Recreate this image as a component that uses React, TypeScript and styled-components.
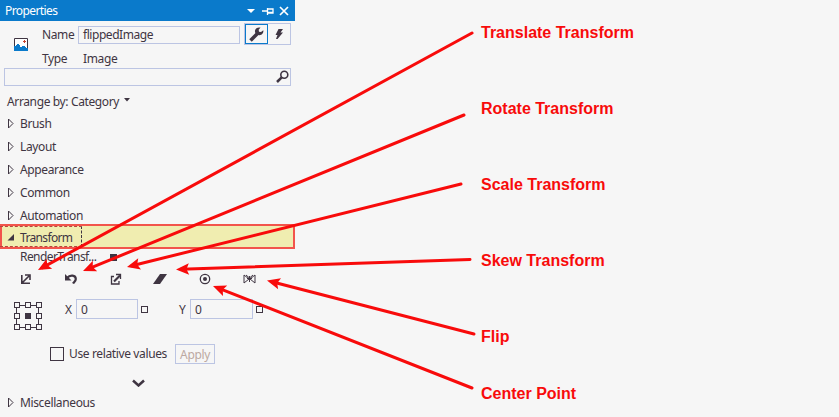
import React from "react";
import styled, { createGlobalStyle } from "styled-components";

const ink = "#3f3542";
const line = "#bcc5e3";

const Global = createGlobalStyle`
  *{box-sizing:border-box}
  body{margin:0;background:#f6f6f6;overflow:hidden}
`;
const Page = styled.main`
  position:relative;display:flex;width:839px;height:417px;background:#f6f6f6;
  font:12px/16px "Noto Sans","Open Sans",sans-serif;color:${ink};
`;
const Panel = styled.section`width:295px;height:417px;display:flex;flex-direction:column;flex:none;`;
const Text = styled.span<{ $track?: number }>`
  white-space:nowrap;letter-spacing:${p => p.$track ?? -0.37}px;
`;
const TitleBar = styled.header`
  height:21px;flex:none;background:#0a7acb;color:#fff;display:flex;justify-content:space-between;align-items:center;padding:0 5px 0 5px;
`;
const Identity = styled.div`
  height:47px;flex:none;display:grid;grid-template-columns:42px 36px 162px 51px;
  grid-template-rows:24px 23px;padding-top:2px;
`;
const Picture = styled.div`grid-row:1 / 3;padding:15px 0 0 14px;svg{display:block}`;
const Cell = styled.div<{ $inset?: number }>`display:flex;align-items:center;padding-left:${p => p.$inset ?? 0}px;`;
const Field = styled.div<{ $w: number; $h: number }>`
  width:${p => p.$w}px;height:${p => p.$h}px;border:1px solid ${line};display:flex;align-items:center;padding-left:4px;flex:none;
`;
const Switcher = styled.div`margin-left:4px;width:47px;height:22px;border:1px solid ${line};display:flex;`;
const Mode = styled.div<{ $active?: boolean }>`
  width:${p => (p.$active ? 23 : 22)}px;height:20px;flex:none;display:flex;align-items:center;justify-content:center;
  border:1px solid ${p => (p.$active ? "#0a7acb" : "transparent")};
`;
const Search = styled.div`
  margin-left:4px;width:287px;height:18px;flex:none;border:1px solid ${line};display:flex;justify-content:flex-end;padding:1px 1px 0 0;
`;
const Arrange = styled.div`height:26px;flex:none;padding:8px 0 0 7px;display:flex;gap:5px;svg{margin-top:4px}`;
const Category = styled.div`
  height:23px;flex:none;display:flex;align-items:center;padding-left:7px;gap:6px;
  svg{margin-top:-1px}
`;
const Selected = styled.div`
  height:25px;margin-top:-3px;flex:none;border:2px solid #f2544b;background:#f0edb0;display:flex;
`;
const Focus = styled.div`
  width:82px;height:21px;margin-left:-2px;display:flex;align-items:center;padding:2px 0 0 7px;gap:6px;
  border:1px dashed ${ink};border-left:0;border-top-color:#b5443e;border-bottom-color:#b5443e;
`;
const Property = styled.div`height:16px;flex:none;display:flex;align-items:center;padding-left:20px;`;
const PropertyName = styled.span`width:90px;white-space:nowrap;letter-spacing:-.58px;`;
const Marker = styled.i<{ $filled?: boolean }>`
  width:7px;height:7px;flex:none;border:1px solid ${ink};background:${p => (p.$filled ? ink : "transparent")};
`;
const Tools = styled.div`
  height:28px;flex:none;display:grid;grid-template-columns:repeat(6,44.7px);padding-left:4px;align-items:center;justify-items:center;
`;
const Coordinates = styled.div`height:48px;flex:none;display:flex;padding:6px 0 0 14px;align-items:flex-start;`;
const Axis = styled.div<{ $left: number }>`
  display:flex;height:20px;align-items:center;margin-left:${p => p.$left}px;line-height:18px;
`;
const AxisName = styled.span`width:11px;padding-top:1px;`;
const Digit = styled.span`padding-top:1px;`;
const Options = styled.div`height:28px;flex:none;display:flex;align-items:center;padding-left:50px;margin-top:-1px;`;
const Check = styled.i`width:14px;height:14px;border:1px solid ${ink};margin-right:5px;flex:none;`;
const Apply = styled.button`
  margin:0 0 0 auto;width:40px;height:20px;padding:0;border:1px solid ${line};background:transparent;color:#bca9a2;font:inherit;
  line-height:20px;
`;
const OptionGroup = styled.div`display:flex;align-items:center;width:165px;`;
const More = styled.div`height:23px;flex:none;display:flex;justify-content:center;align-items:flex-end;padding:0 19px 4px 0;`;
const Notes = styled.aside`
  padding:23px 0 0 186px;display:flex;flex-direction:column;color:#f80b0b;font:bold 16px/20px "Liberation Sans",Arial,sans-serif;
`;
const Note = styled.div<{ $step?: number }>`height:${p => p.$step ?? 76}px;flex:none;white-space:nowrap;`;
const Overlay = styled.svg`position:absolute;inset:0;pointer-events:none;`;

const Closed = () => (
  <svg width="7" height="11" viewBox="0 0 7 11"><path d="M1.500 1v9L6 5.500z" fill="none" stroke={ink} /></svg>
);

const arrows = [
  [472, 33, 38, 270],
  [464, 115, 83, 271],
  [461, 184, 127, 267],
  [470, 259.5, 176, 269.5],
  [474, 334, 267, 280.5],
  [472, 388, 213, 286],
];
const Arrow = ({ at: [x1, y1, x2, y2] }: { at: number[] }) => {
  const angle = (Math.atan2(y2 - y1, x2 - x1) * 180) / Math.PI;
  const length = Math.hypot(x2 - x1, y2 - y1);
  return (
    <g transform={`translate(${x2} ${y2}) rotate(${angle})`}>
      <path d={`M${-length} 0H-5`} stroke="#f80b0b" strokeWidth="3" strokeLinecap="round" />
      <path d="M0 0L-13 -5.700L-10.500 0L-13 5.700Z" fill="#f80b0b" />
    </g>
  );
};

const categories = ["Brush", "Layout", "Appearance", "Common", "Automation"];

export default function App() {
  return (
    <Page>
      <Global />
      <Panel>
        <TitleBar>
          <Text $track={-0.6}>Properties</Text>
          <svg width="44" height="12" viewBox="0 0 44 12">
            <path d="M1 4h8L5 8z" fill="#fff" />
            <path d="M16 6h5M21.500 3v7M22 4h5v4h-5M22 7.500h5" fill="none" stroke="#fff" strokeWidth="1.300" />
            <path d="M34 2l8 8M42 2l-8 8" stroke="#fff" strokeWidth="1.700" />
          </svg>
        </TitleBar>
        <Identity>
          <Picture>
            <svg width="14" height="13" viewBox="0 0 14 13">
              <path d="M.5.5h13v12H.5z" fill="#fff" stroke={ink} />
              <path d="M0 8h2V7h1V6h2v1h1v2h2V8h3v1h1v1h2v3H0z" fill="#0a7acb" />
              <path d="M9 3.500h3M10.500 2v3" stroke="#c7432e" />
            </svg>
          </Picture>
          <Cell><Text>Name</Text></Cell>
          <Cell><Field $w={162} $h={18}><Text $track={-0.45}>flippedImage</Text></Field></Cell>
          <Switcher>
            <Mode $active>
              <svg width="15" height="15" viewBox="0 0 15 15">
                <path d="M1.500 13.500L9 6" stroke={ink} strokeWidth="3.600" />
                <path d="M11.500.6L9.700 2.800l.3 2 2 .3L14.300 3.300c.5 2.500-1.200 5-4 4.900C7.400 8 5.600 6 6 3.600 6.500 1 9 0 11.500.6z" fill={ink} />
              </svg>
            </Mode>
            <Mode>
              <svg width="9" height="12" viewBox="0 0 9 12"><path d="M3.500 1H8L5.500 4.500H8L2.500 11H1l1.500-4H.5z" fill={ink} /></svg>
            </Mode>
          </Switcher>
          <Cell><Text>Type</Text></Cell>
          <Cell $inset={5}><Text>Image</Text></Cell>
        </Identity>
        <Search>
          <svg width="13" height="13" viewBox="0 0 13 13">
            <circle cx="8.300" cy="4.700" r="3.500" fill="none" stroke={ink} strokeWidth="1.600" />
            <path d="M5.700 7.300L1 12" stroke={ink} strokeWidth="2.500" />
          </svg>
        </Search>
        <Arrange>
          <Text>Arrange by: Category</Text>
          <svg width="6" height="4" viewBox="0 0 6 4"><path d="M0 0h6L3 3.500z" fill={ink} /></svg>
        </Arrange>
        {categories.map(name => <Category key={name}><Closed /><Text>{name}</Text></Category>)}
        <Selected>
          <Focus>
            <svg width="7" height="7" viewBox="0 0 7 7"><path d="M7 0v6.500H.5z" fill={ink} /></svg>
            <Text $track={-0.65}>Transform</Text>
          </Focus>
        </Selected>
        <Property><PropertyName>RenderTransf...</PropertyName><Marker $filled /></Property>
        <Tools>
          <svg width="12" height="12" viewBox="0 0 12 12"><path d="M1.800 2v8.200H10M2.500 9.500L9 3M5 2h5v5" fill="none" stroke={ink} strokeWidth="1.600" /></svg>
          <svg width="14" height="12" viewBox="0 0 14 12"><path d="M3 5C6 1.500 11.800 2 11.800 6c0 2-1.800 3-2.800 4.500" fill="none" stroke={ink} strokeWidth="2.200" /><path d="M1 1v6.500h6.500z" fill={ink} /></svg>
          <svg width="12" height="12" viewBox="0 0 12 12"><path d="M4 3.500H1.500v7.500H9V8M6 1.500h4.500V6" fill="none" stroke={ink} strokeWidth="1.300" /><path d="M4 8.500L10 2.500" stroke={ink} strokeWidth="2.200" /></svg>
          <svg width="14" height="10" viewBox="0 0 14 10"><path d="M7 0h7L7 10H0z" fill={ink} /></svg>
          <svg width="12" height="12" viewBox="0 0 12 12"><circle cx="6" cy="6" r="4.700" fill="none" stroke={ink} strokeWidth="1.300" /><circle cx="6" cy="6" r="2" fill={ink} /></svg>
          <svg width="13" height="10" viewBox="0 0 13 10"><path d="M1 1v8l5-4zM12 1v8L7 5zM3 1l3.500 3L10 1M6.500 2v6M4 4.500h5" fill="none" stroke={ink} /></svg>
        </Tools>
        <Coordinates>
          <svg width="28" height="32" viewBox="0 0 28 32">
            <path d="M2.500 6.500h22v22h-22z" fill="none" stroke={ink} />
            {[3.5, 14.5, 25.5].map(y => [2.5, 13.5, 24.5].map(x => (
              <rect key={`${x}-${y}`} x={x - 2} y={y} width="5" height="5" fill={x === 13.5 && y === 14.5 ? ink : "#f6f6f6"} stroke={ink} />
            )))}
          </svg>
          <Axis $left={23}><AxisName>X</AxisName><Field $w={62} $h={20}><Digit>0</Digit></Field></Axis>
          <Axis $left={3}><Marker /></Axis>
          <Axis $left={31}><AxisName>Y</AxisName><Field $w={63} $h={20}><Digit>0</Digit></Field></Axis>
          <Axis $left={3}><Marker /></Axis>
        </Coordinates>
        <Options>
          <OptionGroup><Check /><Text>Use relative values</Text><Apply><Text>Apply</Text></Apply></OptionGroup>
        </Options>
        <More><svg width="13" height="8" viewBox="0 0 13 8"><path d="M1 1.500L6.500 6.500 12 1.500" fill="none" stroke={ink} strokeWidth="2.500" /></svg></More>
        <Category><Closed /><Text>Miscellaneous</Text></Category>
      </Panel>
      <Notes>
        <Note>Translate Transform</Note>
        <Note>Rotate Transform</Note>
        <Note>Scale Transform</Note>
        <Note>Skew Transform</Note>
        <Note $step={57}>Flip</Note>
        <Note $step={20}>Center Point</Note>
      </Notes>
      <Overlay width="839" height="417">{arrows.map(a => <Arrow key={a[1]} at={a} />)}</Overlay>
    </Page>
  );
}
